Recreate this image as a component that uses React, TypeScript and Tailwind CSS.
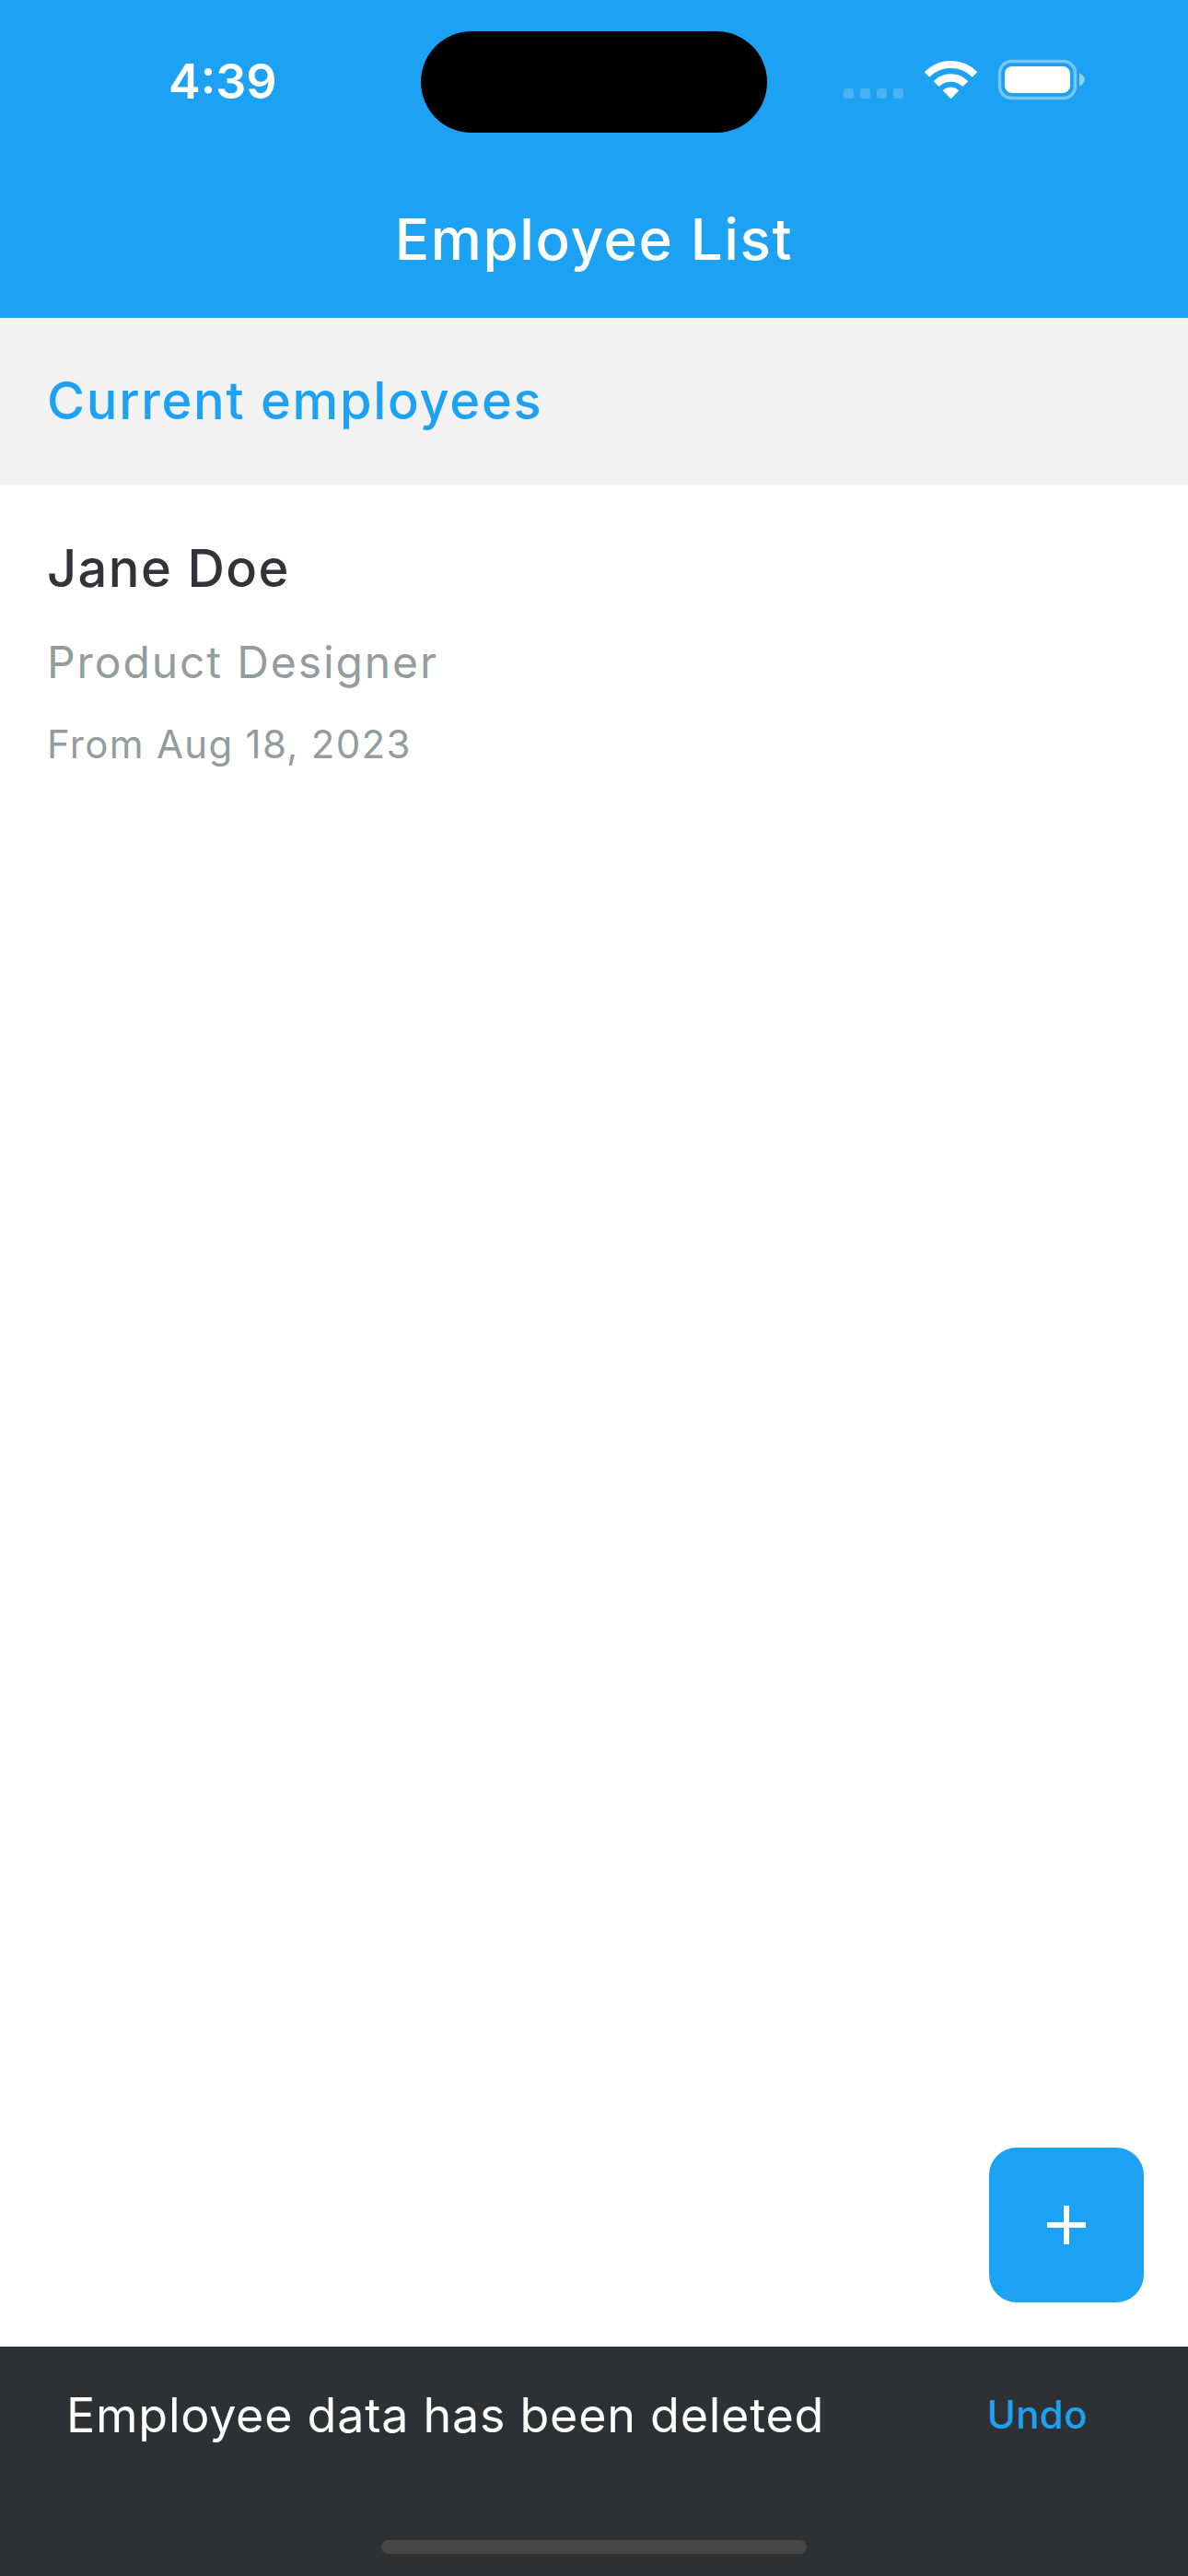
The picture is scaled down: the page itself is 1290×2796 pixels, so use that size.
function StatusIcons() {
  return (
    <svg className="absolute left-[900px] top-[50px]" width="300" height="76" viewBox="900 50 300 76">
      <g fill="#fff" fillOpacity="0.2">
        <rect x="916" y="96" width="11" height="11" rx="3" />
        <rect x="934" y="96" width="11" height="11" rx="3" />
        <rect x="952" y="96" width="11" height="11" rx="3" />
        <rect x="970" y="96" width="11" height="11" rx="3" />
      </g>
      <g fill="#fff" stroke="#fff" strokeWidth="1.4" strokeLinejoin="round">
        <path d="M1004.7 78.2A39.5 39.5 0 0 1 1060.3 78.2L1055.7 82.8A33 33 0 0 0 1009.3 82.8Z" />
        <path d="M1014.7 88.2A25.5 25.5 0 0 1 1050.3 88.2L1045.4 93A19.5 19.5 0 0 0 1019.6 93Z" />
        <path d="M1024.7 98.2A12 12 0 0 1 1040.3 98.2L1032.5 106.3Z" />
      </g>
      <rect x="1085.5" y="66.5" width="82" height="40" rx="13" fill="none" stroke="#fff" strokeOpacity="0.4" strokeWidth="3.4" />
      <rect x="1091" y="72" width="71" height="29" rx="8" fill="#fff" />
      <path d="M1172 79.5C1175.6 81 1177.9 83.4 1177.9 86.5S1175.6 92 1172 93.5Z" fill="#fff" fillOpacity="0.5" />
    </svg>
  );
}

export default function App() {
  return (
    <div className="flex h-[2796px] w-[1290px] flex-col overflow-hidden bg-white font-['Inter',sans-serif]">
      <header className="h-[345px] bg-[#1da1f2] text-white">
        <div className="relative h-[177px]">
          <div className="absolute left-[457px] top-[34px] h-[110px] w-[376px] rounded-full bg-black" />
          <span className="absolute left-[183px] top-[59px] whitespace-nowrap text-[52px] font-semibold leading-[60px]">4:39</span>
          <StatusIcons />
        </div>
        <h1 className="mt-[43px] text-center text-[62px] font-medium leading-[80px] tracking-[1.6px]">Employee List</h1>
      </header>
      <section className="h-[181px] bg-[#f2f2f2] px-[51px] pt-[54px] text-[56px] font-medium leading-[72px] tracking-[1.7px] text-[#1da1f2]">Current employees</section>
      <main className="flex flex-1 flex-col px-[48px] pb-[48px] pt-[55px] text-[#949c9e]">
        <div className="pl-[3px]">
          <p className="text-[56px] font-medium leading-[72px] tracking-[1.4px] text-[#323238]">Jane Doe</p>
          <p className="mt-[36px] text-[48px] leading-[60px] tracking-[1.9px]">Product Designer</p>
          <p className="mt-[34px] text-[42px] leading-[50px] tracking-[1.3px]">From Aug 18, 2023</p>
        </div>
        <button className="mt-auto flex size-[168px] items-center justify-center self-end rounded-[30px] bg-[#1da1f2]" aria-label="Add employee">
          <svg width="42" height="42" viewBox="0 0 42 42" stroke="#fff" strokeWidth="6">
            <path d="M21 0V42M0 21H42" />
          </svg>
        </button>
      </main>
      <footer className="flex h-[249px] flex-col bg-[#2f3034] pb-[24px] pt-[39px]">
        <div className="flex justify-between pl-[72px] pr-[109px]">
          <p className="mt-[1px] text-[52px] leading-[70px] tracking-[0.75px] text-white">Employee data has been deleted</p>
          <button className="h-[70px] text-[42px] font-medium leading-[70px] tracking-[0.4px] text-[#1da1f2]">Undo</button>
        </div>
        <div className="mx-auto mt-auto h-[15px] w-[462px] rounded-full bg-[#484848]" />
      </footer>
    </div>
  );
}
